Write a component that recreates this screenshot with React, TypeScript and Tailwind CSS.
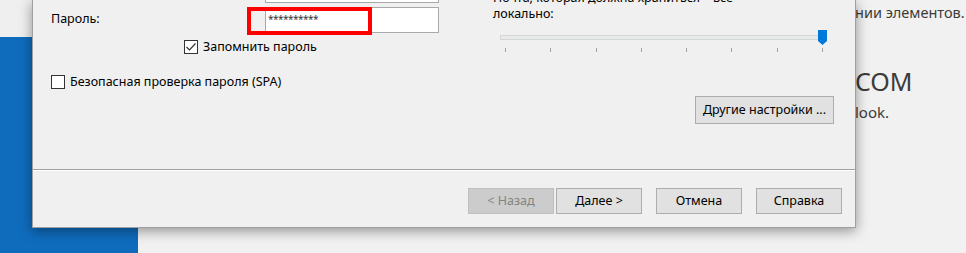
import React from "react";

const font = { fontFamily: '"Noto Sans", "Open Sans", sans-serif' };

const Checkbox = ({ checked }: { checked?: boolean }) => (
  <div className="w-[14px] h-[14px] border border-[#333333] bg-white flex items-center justify-center shrink-0">
    {checked && (
      <svg width="12" height="12" viewBox="0 0 12 12">
        <polyline points="1.5,6 4.5,9 10.5,2.5" fill="none" stroke="#333333" strokeWidth="1.2" />
      </svg>
    )}
  </div>
);

const DlgButton = ({ label, disabled }: { label: string; disabled?: boolean }) => (
  <div
    className={
      disabled
        ? "w-[86px] h-[26px] border border-[#bfbfbf] bg-[#cccccc] text-[#838383] flex items-center justify-center"
        : "w-[86px] h-[26px] border border-[#adadad] bg-[#e1e1e1] text-black flex items-center justify-center"
    }
  >
    {label}
  </div>
);

const ticks = [505, 550, 596, 641, 686, 731, 777, 822];

export default function App() {
  return (
    <div className="relative w-[966px] h-[253px] overflow-hidden flex bg-[#f1f1f1]" style={font}>
      {/* background window */}
      <div className="w-[138px] shrink-0 flex flex-col">
        <div className="h-[37px] bg-[#efefef]" />
        <div className="flex-1 bg-[#0f6cbd]" />
      </div>
      <div className="flex-1 min-w-0 pl-[719px] text-[#3b3b3b]">
        <div className="text-[14.5px] leading-[20px] mt-[2px] -ml-[2px] whitespace-nowrap">нии элементов.</div>
        <div className="text-[25px] leading-[30px] mt-[44px] -ml-[2px] whitespace-nowrap">COM</div>
        <div className="text-[15px] leading-[20px] mt-[6px] -ml-[2px] whitespace-nowrap">look.</div>
      </div>

      {/* dialog */}
      <div className="absolute left-[32px] top-0 w-[824px] h-[228px] bg-[#f0f0f0] border-x border-b border-[#a0a0a0] shadow-[0_3px_12px_rgba(0,0,0,0.4)] flex flex-col text-[12.5px] text-black">
        <div className="h-[169px] flex">
          {/* left column */}
          <div className="w-[460px] pl-[18px]">
            <div className="ml-[214px] w-[174px] h-[3px] bg-white border-x border-b border-[#a9a9a9]" />
            <div className="flex items-start mt-[4px]">
              <div className="w-[214px] pt-[4px] leading-[16px]">Пароль:</div>
              <div className="relative w-[174px] h-[26px] bg-white border border-[#a9a9a9] pl-[2px] pt-[5px] text-[10px] leading-[12px] text-[#333333] tracking-[-0.5px]">
                **********
                <div className="absolute -left-[19px] -top-[1px] w-[125px] h-[28px] border-4 border-[#ff0000]" />
              </div>
            </div>
            <div className="flex items-center gap-[5px] mt-[7px] ml-[133px] leading-[14px]">
              <Checkbox checked />
              <span>Запомнить пароль</span>
            </div>
            <div className="flex items-center gap-[5px] mt-[21px] leading-[14px]">
              <Checkbox />
              <span>Безопасная проверка пароля (SPA)</span>
            </div>
          </div>

          {/* right column */}
          <div className="flex-1 flex flex-col">
            <div className="-mt-[10px] leading-[16px] whitespace-nowrap">
              <div>Почта, которая должна храниться&nbsp;&nbsp;&nbsp;&nbsp;все</div>
              <div>локально:</div>
            </div>
            <div className="ml-[7px] mt-[13px] w-[327px] h-[5px] bg-[#e7eaea] border border-[#d6d6d6] relative">
              <svg className="absolute left-[317px] -top-[6px]" width="9" height="15" viewBox="0 0 9 15">
                <path d="M0 0 H9 V11 L4.5 15 L0 11 Z" fill="#0078d7" />
              </svg>
            </div>
            <div className="relative h-[4px] mt-[8px]">
              {ticks.map((x) => (
                <div key={x} className="absolute top-0 w-px h-[4px] bg-[#a0a0a0]" style={{ left: x - 493 }} />
              ))}
            </div>
            <div className="ml-[202px] mt-[44px] w-[139px] h-[28px] border border-[#adadad] bg-[#e1e1e1] flex items-center justify-center">
              Другие настройки ...
            </div>
          </div>
        </div>

        {/* separator */}
        <div className="h-px bg-[#a0a0a0]" />
        <div className="h-px bg-white" />

        {/* buttons */}
        <div className="flex justify-end pr-[13px] mt-[17px]">
          <DlgButton label="< Назад" disabled />
          <div className="w-[2px]" />
          <DlgButton label="Далее >" />
          <div className="w-[14px]" />
          <DlgButton label="Отмена" />
          <div className="w-[14px]" />
          <DlgButton label="Справка" />
        </div>
      </div>
    </div>
  );
}
